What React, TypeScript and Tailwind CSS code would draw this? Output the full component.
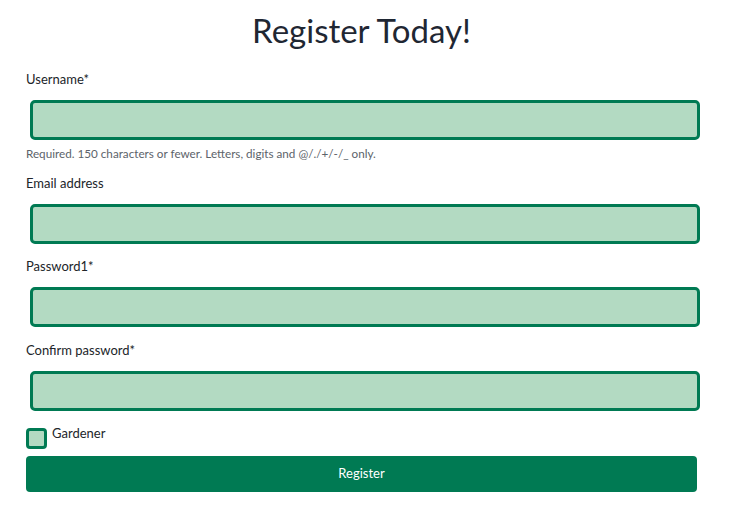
import React from "react";

const font = { fontFamily: '"Trebuchet MS", "Lato", "Open Sans", sans-serif' };

function Field({ label, help, top }: { label: string; help?: string; top: string }) {
  return (
    <div className={top}>
      <label className="block h-5 text-[13px] leading-5 text-[#212529]">{label}</label>
      <input
        type="text"
        className="mt-[11px] ml-1 block h-10 w-[670px] rounded-[5px] border-[3px] border-[#007a53] bg-[#b3dac2] outline-none"
      />
      {help && (
        <p className="mt-[5px] h-4 text-[11.7px] leading-4 text-[#5c636a]">{help}</p>
      )}
    </div>
  );
}

export default function App() {
  return (
    <div className="min-h-[522px] w-[747px] bg-white pl-[26px] text-[#212529]" style={font}>
      <div className="w-[671px]">
        <h1 className="flex h-[62px] items-center justify-center text-[33px] font-normal text-[#1f2733]">
          Register Today!
        </h1>
        <Field top="mt-[7px]" label="Username*" help="Required. 150 characters or fewer. Letters, digits and @/./+/-/_ only." />
        <Field top="mt-[12px]" label="Email address" />
        <Field top="mt-[12px]" label="Password1*" />
        <Field top="mt-[13px]" label="Confirm password*" />
        <div className="mt-[12px] flex items-start gap-[5px]">
          <span className="mt-[5px] block h-[21px] w-[21px] rounded-[4px] border-[3px] border-[#007a53] bg-[#b3dac2]" />
          <span className="h-5 text-[13px] leading-5">Gardener</span>
        </div>
        <button className="mt-[7px] flex h-9 w-[671px] items-center justify-center rounded-[4px] bg-[#007a53] text-[13px] text-white">
          Register
        </button>
      </div>
    </div>
  );
}
